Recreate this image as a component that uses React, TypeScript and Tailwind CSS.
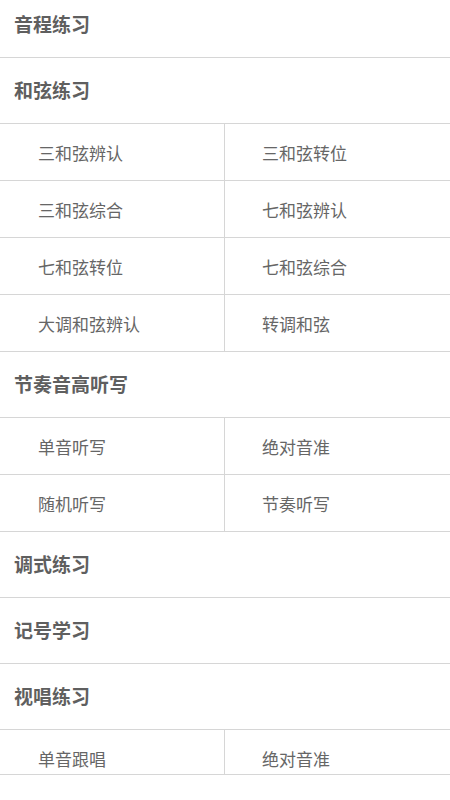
import React from 'react';

type Section = { title: string; items?: string[] };

const sections: Section[] = [
  { title: '音程练习' },
  {
    title: '和弦练习',
    items: ['三和弦辨认', '三和弦转位', '三和弦综合', '七和弦辨认', '七和弦转位', '七和弦综合', '大调和弦辨认', '转调和弦'],
  },
  { title: '节奏音高听写', items: ['单音听写', '绝对音准', '随机听写', '节奏听写'] },
  { title: '调式练习' },
  { title: '记号学习' },
  { title: '视唱练习', items: ['单音跟唱', '绝对音准'] },
];

const font = { fontFamily: '"Noto Sans CJK SC", "Noto Sans", sans-serif' };

export default function App() {
  return (
    <div className="h-[800px] w-[450px] overflow-hidden bg-white" style={font}>
      <div className="-mt-[8px]">
        {sections.map((s, si) => (
          <div key={s.title}>
            <div className="flex h-[66px] items-center border-b border-[#d6d6d6] pl-[14px] text-[19px] font-bold text-[#5f5f5f]">
              {s.title}
            </div>
            {s.items && (
              <div className="grid grid-cols-2">
                {s.items.map((it, i) => {
                  const last = si === sections.length - 1;
                  return (
                    <div
                      key={it + i}
                      className={
                        'flex border-b border-[#d6d6d6] text-[17px] text-[#666666] ' +
                        (i % 2 === 0 ? 'border-r pl-[38px] ' : 'pl-[37px] ') +
                        (last ? 'h-[45px] items-start pt-[20px]' : 'h-[57px] items-center')
                      }
                    >
                      <span className="leading-none">{it}</span>
                    </div>
                  );
                })}
              </div>
            )}
          </div>
        ))}
      </div>
    </div>
  );
}
